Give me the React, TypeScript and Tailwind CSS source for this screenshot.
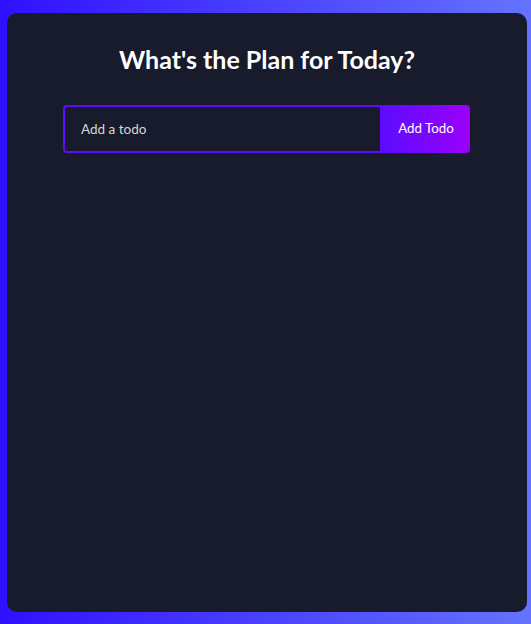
export default function App() {
  return (
    <div className="h-[624px] w-full overflow-hidden bg-[linear-gradient(90deg,#3010ff_0%,#6473ff_100%)] pt-[13px] font-['Lato',sans-serif]">
      <div className="ml-[7px] flex h-[599px] w-[520px] flex-col rounded-[10px] bg-[#171b2b] pb-8">
        <h1 className="my-8 text-center text-[25px] leading-[28px] font-bold text-white">What's the Plan for Today?</h1>
        <form className="ml-[56px] flex" onSubmit={(e) => e.preventDefault()}>
          <input
            type="text"
            placeholder="Add a todo"
            className="h-12 w-[319px] rounded-l-[4px] border-2 border-[#5d0cff] bg-transparent py-[14px] pr-8 pl-4 text-[13.5px] text-white outline-none placeholder:text-[#d6d6d6]"
          />
          <button
            type="submit"
            className="h-12 w-[88px] rounded-r-[4px] bg-[linear-gradient(90deg,#5d0cff_0%,#9b00fa_100%)] text-[13.3px] text-white"
          >
            Add Todo
          </button>
        </form>
      </div>
    </div>
  )
}
